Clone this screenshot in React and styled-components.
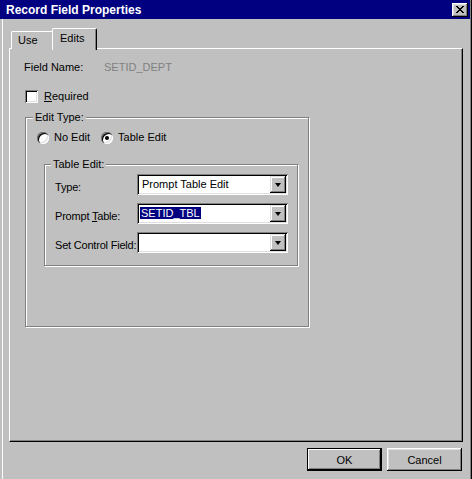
import React from "react";
import styled, { createGlobalStyle } from "styled-components";

const GlobalStyle = createGlobalStyle`
  html, body {
    margin: 0;
    padding: 0;
    background: #c0c0c0;
  }
  body {
    font-family: "Liberation Sans", Arial, sans-serif;
    font-size: 11px;
    color: #000;
  }
  * {
    box-sizing: border-box;
  }
`;

const Window = styled.div`
  width: 472px;
  height: 479px;
  background: #c0c0c0;
  display: flex;
  flex-direction: column;
  box-shadow: inset -1px 0 0 #000, inset -2px 0 0 #808080, inset 2px 0 0 #c0c0c0,
    inset 3px 0 0 #fff;
`;

const TitleBar = styled.div`
  height: 19px;
  margin-right: 2px;
  background: #000080;
  color: #fff;
  font-weight: bold;
  font-size: 12px;
  display: flex;
  align-items: center;
  justify-content: space-between;
  padding: 0 2px 0 6px;
`;

const CloseButton = styled.div`
  width: 16px;
  height: 14px;
  background: #c0c0c0;
  display: flex;
  align-items: center;
  justify-content: center;
  box-shadow: inset -1px -1px 0 #000, inset 1px 1px 0 #fff, inset -2px -2px 0 #808080,
    inset 2px 2px 0 #dfdfdf;
`;

const Body = styled.div`
  display: flex;
  flex-direction: column;
  padding: 9px 0 0 9px;
`;

const TabStrip = styled.div`
  display: flex;
  align-items: flex-end;
  height: 21px;
  padding-left: 2px;
`;

const Tab = styled.div`
  position: relative;
  z-index: ${(p) => (p.$active ? 1 : 0)};
  width: ${(p) => p.$width}px;
  height: ${(p) => (p.$active ? 22 : 18)}px;
  margin-left: ${(p) => (p.$active ? -2 : 0)}px;
  margin-bottom: ${(p) => (p.$active ? -1 : 0)}px;
  padding: ${(p) => (p.$active ? "2px 0 0 7px" : "1px 0 0 6px")};
  line-height: 14px;
  background: #c0c0c0;
  border-top: 1px solid #fff;
  border-left: 1px solid #fff;
  border-right: 1px solid #000;
  border-radius: 2px 2px 0 0;
  box-shadow: inset -1px 0 0 #808080;
`;

const Panel = styled.div`
  width: 454px;
  height: 394px;
  margin-top: -1px;
  border-top: 1px solid #fff;
  border-left: 1px solid #fff;
  border-right: 1px solid #000;
  border-bottom: 1px solid #000;
  box-shadow: inset -1px -1px 0 #808080;
  padding: 12px 0 0 14px;
  display: flex;
  flex-direction: column;
`;

const FieldRow = styled.div`
  display: flex;
  height: 13px;
  line-height: 13px;
`;

const FieldLabel = styled.span`
  width: 80px;
`;

const FieldValue = styled.span`
  color: #808080;
`;

const CheckRow = styled.label`
  display: flex;
  align-items: center;
  gap: 6px;
  margin: 16px 0 0 1px;
  line-height: 13px;
`;

const CheckBox = styled.span`
  width: 13px;
  height: 13px;
  background: #fff;
  box-shadow: inset 1px 1px 0 #808080, inset -1px -1px 0 #fff, inset 2px 2px 0 #000,
    inset -2px -2px 0 #dfdfdf;
`;

const GroupBox = styled.fieldset`
  margin: ${(p) => p.$margin};
  padding: 0;
  width: ${(p) => p.$width}px;
  height: ${(p) => p.$height}px;
  min-width: 0;
  border: 1px solid #808080;
  box-shadow: inset 1px 1px 0 #fff, 1px 1px 0 #fff;
  display: flex;
  flex-direction: column;
`;

const GroupLegend = styled.legend`
  margin-left: ${(p) => p.$offset}px;
  padding: 0 2px;
  line-height: 13px;
  background: #c0c0c0;
`;

const RadioRow = styled.div`
  display: flex;
  align-items: center;
  gap: 11px;
  margin: 7px 0 0 11px;
`;

const RadioOption = styled.label`
  display: flex;
  align-items: center;
  gap: 5px;
  line-height: 13px;
`;

const RadioCircle = styled.span`
  width: 12px;
  height: 12px;
  border-radius: 50%;
  background: #fff;
  display: flex;
  align-items: center;
  justify-content: center;
  box-shadow: inset 1px 1px 0 #808080, inset 2px 2px 0 #000, inset -1px -1px 0 #fff,
    inset -2px -2px 0 #dfdfdf;

  &::after {
    content: "";
    width: 4px;
    height: 4px;
    border-radius: 50%;
    background: ${(p) => (p.$checked ? "#000" : "transparent")};
  }
`;

const FormRows = styled.div`
  display: flex;
  flex-direction: column;
  gap: 8px;
  margin: 3px 0 0 10px;
`;

const FormRow = styled.div`
  display: flex;
  align-items: flex-start;
`;

const FormLabel = styled.span`
  width: 82px;
  flex-shrink: 0;
  padding-top: 7px;
  line-height: 13px;
  white-space: nowrap;
  letter-spacing: -0.2px;
`;

const Combo = styled.div`
  width: 151px;
  height: 21px;
  flex-shrink: 0;
  background: #fff;
  padding: 2px;
  display: flex;
  align-items: center;
  box-shadow: inset 1px 1px 0 #808080, inset -1px -1px 0 #fff, inset 2px 2px 0 #000,
    inset -2px -2px 0 #dfdfdf;
`;

const ComboText = styled.span`
  flex: 1;
  padding-left: 3px;
  line-height: 13px;
  white-space: nowrap;
`;

const Highlight = styled.span`
  background: #000080;
  color: #fff;
  padding: 0 1px;
  margin-left: -2px;
`;

const ComboButton = styled.span`
  width: 16px;
  height: 17px;
  background: #c0c0c0;
  display: flex;
  align-items: center;
  justify-content: center;
  box-shadow: inset -1px -1px 0 #000, inset 1px 1px 0 #dfdfdf, inset -2px -2px 0 #808080,
    inset 2px 2px 0 #fff;

  &::after {
    content: "";
    margin-top: 1px;
    border-left: 3.5px solid transparent;
    border-right: 3.5px solid transparent;
    border-top: 4px solid #000;
  }
`;

const ButtonRow = styled.div`
  display: flex;
  justify-content: flex-end;
  gap: 5px;
  margin-top: 6px;
  padding-right: 10px;
`;

const Button = styled.button`
  width: 75px;
  height: 23px;
  font-family: inherit;
  font-size: 11px;
  color: #000;
  background: #c0c0c0;
  border: ${(p) => (p.$default ? "1px solid #000" : "none")};
  padding: 0;
  box-shadow: ${(p) =>
    p.$default
      ? "inset -1px -1px 0 #000, inset 1px 1px 0 #fff, inset -2px -2px 0 #808080"
      : "inset -1px -1px 0 #000, inset 1px 1px 0 #fff, inset -2px -2px 0 #808080, inset 2px 2px 0 #dfdfdf"};
`;

const CloseGlyph = () => (
  <svg width="8" height="7" viewBox="0 0 8 7" shapeRendering="crispEdges">
    <path
      fill="#000"
      d="M0 0h2v1H0z M6 0h2v1H6z M1 1h2v1H1z M5 1h2v1H5z M2 2h4v1H2z M3 3h2v1H3z M2 4h4v1H2z M1 5h2v1H1z M5 5h2v1H5z M0 6h2v1H0z M6 6h2v1H6z"
    />
  </svg>
);

const ComboBox = ({ children }) => (
  <Combo>
    <ComboText>{children}</ComboText>
    <ComboButton />
  </Combo>
);

export default function App() {
  return (
    <>
      <GlobalStyle />
      <Window>
        <TitleBar>
          <span>Record Field Properties</span>
          <CloseButton>
            <CloseGlyph />
          </CloseButton>
        </TitleBar>
        <Body>
          <TabStrip>
            <Tab $width={43}>Use</Tab>
            <Tab $width={45} $active>
              Edits
            </Tab>
          </TabStrip>
          <Panel>
            <FieldRow>
              <FieldLabel>Field Name:</FieldLabel>
              <FieldValue>SETID_DEPT</FieldValue>
            </FieldRow>
            <CheckRow>
              <CheckBox />
              <span>
                <u>R</u>equired
              </span>
            </CheckRow>
            <GroupBox $margin="8px 0 0 1px" $width={284} $height={216}>
              <GroupLegend $offset={7}>Edit Type:</GroupLegend>
              <RadioRow>
                <RadioOption>
                  <RadioCircle />
                  No Edit
                </RadioOption>
                <RadioOption>
                  <RadioCircle $checked />
                  Table Edit
                </RadioOption>
              </RadioRow>
              <GroupBox $margin="14px 0 0 18px" $width={254} $height={108}>
                <GroupLegend $offset={6}>Table Edit:</GroupLegend>
                <FormRows>
                  <FormRow>
                    <FormLabel>Type:</FormLabel>
                    <ComboBox>Prompt Table Edit</ComboBox>
                  </FormRow>
                  <FormRow>
                    <FormLabel>
                      Prompt <u>T</u>able:
                    </FormLabel>
                    <ComboBox>
                      <Highlight>SETID_TBL</Highlight>
                    </ComboBox>
                  </FormRow>
                  <FormRow>
                    <FormLabel>Set Control Field:</FormLabel>
                    <ComboBox />
                  </FormRow>
                </FormRows>
              </GroupBox>
            </GroupBox>
          </Panel>
          <ButtonRow>
            <Button $default>OK</Button>
            <Button>Cancel</Button>
          </ButtonRow>
        </Body>
      </Window>
    </>
  );
}
